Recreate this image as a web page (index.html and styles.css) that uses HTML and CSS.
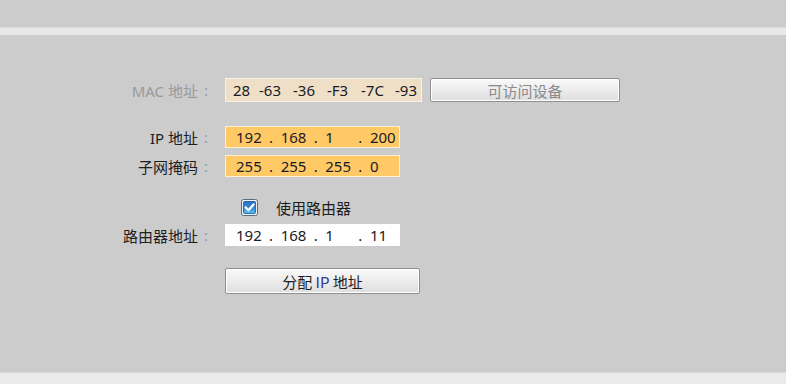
FILE: index.html
```html
<!DOCTYPE html>
<html lang="zh-CN">
<head>
  <meta charset="UTF-8">
  <meta name="viewport" content="width=device-width, initial-scale=1.0">
  <title>以太网地址</title>
  <link rel="stylesheet" href="styles.css">
</head>
<body>
  <div class="top-gap"></div>
  <div class="strip"></div>

  <div class="form">
    <div class="row row-mac">
      <span class="label disabled">MAC 地址</span>
      <span class="colon">:</span>
      <div class="field field-mac">
        <span class="mac-seg first">28</span>
        <span class="mac-seg">-63</span>
        <span class="mac-seg">-36</span>
        <span class="mac-seg">-F3</span>
        <span class="mac-seg">-7C</span>
        <span class="mac-seg last">-93</span>
      </div>
      <button class="btn btn-devices" disabled>可访问设备</button>
    </div>

    <div class="row row-ip">
      <span class="label">IP 地址</span>
      <span class="colon">:</span>
      <div class="field field-ip orange">
        <span class="seg">192</span><span class="dot">.</span>
        <span class="seg">168</span><span class="dot">.</span>
        <span class="seg">1</span><span class="dot">.</span>
        <span class="seg">200</span>
      </div>
    </div>

    <div class="row row-mask">
      <span class="label">子网掩码</span>
      <span class="colon">:</span>
      <div class="field field-ip orange">
        <span class="seg">255</span><span class="dot">.</span>
        <span class="seg">255</span><span class="dot">.</span>
        <span class="seg">255</span><span class="dot">.</span>
        <span class="seg">0</span>
      </div>
    </div>

    <div class="row row-check">
      <span class="label"></span>
      <span class="colon"></span>
      <label class="check">
        <svg class="check-box" width="17" height="17" viewBox="0 0 17 17">
          <defs>
            <linearGradient id="cb" x1="0" y1="0" x2="0" y2="1">
              <stop offset="0" stop-color="#2a6fc4"/>
              <stop offset="0.6" stop-color="#3a8fe0"/>
              <stop offset="1" stop-color="#56c0f0"/>
            </linearGradient>
          </defs>
          <rect x="0.5" y="0.5" width="16" height="16" rx="2" fill="#eef3f8" stroke="#5a6a7a"/>
          <rect x="2.5" y="2.5" width="12" height="12" rx="1" fill="url(#cb)" stroke="#1f4f8f" stroke-width="0.8"/>
          <path d="M4.6 8.4 L7.4 11.2 L12.6 5.4" fill="none" stroke="#fff" stroke-width="2.2" stroke-linecap="round" stroke-linejoin="round"/>
        </svg>
        <span class="check-text">使用路由器</span>
      </label>
    </div>

    <div class="row row-router">
      <span class="label">路由器地址</span>
      <span class="colon">:</span>
      <div class="field field-ip white">
        <span class="seg">192</span><span class="dot">.</span>
        <span class="seg">168</span><span class="dot">.</span>
        <span class="seg">1</span><span class="dot">.</span>
        <span class="seg">11</span>
      </div>
    </div>

    <div class="row row-assign">
      <span class="label"></span>
      <span class="colon"></span>
      <button class="btn btn-assign">分配 <span class="ip">IP</span> 地址</button>
    </div>
  </div>

  <div class="bottom-strip"></div>
</body>
</html>
```

FILE: styles.css
```css
html, body {
  margin: 0;
  height: 100%;
}
body {
  background-color: #cccccc;
  color: #222;
  font-family: "Noto Sans", "Noto Sans CJK SC", sans-serif;
  font-size: 15px;
  display: flex;
  flex-direction: column;
  height: 384px;
  overflow: hidden;
}
.top-gap {
  height: 27px;
}
.strip {
  height: 7px;
  background-color: #e8e8e8;
  border-top: 1px solid #dadada;
}
.form {
  padding-top: 43px;
}
.row {
  display: flex;
  align-items: center;
}
.label {
  width: 198px;
  text-align: right;
  color: #1e1e1e;
  white-space: nowrap;
}
.label.disabled {
  color: #9a9a9a;
}
.colon {
  width: 27px;
  padding-left: 6px;
  box-sizing: border-box;
  color: #8fa0b0;
}
.field {
  display: flex;
  align-items: center;
  box-sizing: border-box;
  height: 22px;
  border: 1px solid #f8f2e6;
  color: #1a1a28;
  white-space: nowrap;
}
.field-mac {
  width: 197px;
  height: 24px;
  padding-left: 7px;
  background-color: #eedfc6;
  overflow: hidden;
}
.mac-seg {
  width: 34px;
}
.mac-seg.first {
  width: 26px;
}
.mac-seg.last {
  width: auto;
}
.field-ip {
  width: 175px;
  padding-left: 10px;
}
.orange {
  background-color: #ffc966;
  border-color: #fff0d2;
}
.white {
  background-color: #ffffff;
  border-color: #ffffff;
}
.seg {
  width: 30px;
}
.dot {
  width: 12px;
  padding-left: 4px;
}
.btn {
  box-sizing: border-box;
  font-family: "Noto Sans CJK SC", "Noto Sans", sans-serif;
  font-size: 15px;
  border: 1px solid #8e8e8e;
  border-radius: 2px;
  background: linear-gradient(#fafafa, #ececec 50%, #dedede);
  box-shadow: inset 0 0 0 1px #ffffff;
  padding: 0;
  cursor: pointer;
}
.btn-devices {
  width: 190px;
  height: 24px;
  margin-left: 8px;
  color: #8a8a8a;
}
.row-ip {
  margin-top: 24px;
}
.row-mask {
  margin-top: 7px;
}
.row-check {
  margin-top: 19px;
  height: 22px;
}
.check {
  display: flex;
  align-items: center;
  padding-left: 16px;
}
.check-box {
  display: block;
}
.check-text {
  margin-left: 18px;
  color: #1e1e1e;
}
.row-router {
  margin-top: 6px;
}
.row-assign {
  margin-top: 22px;
}
.btn-assign {
  width: 195px;
  height: 26px;
  color: #1e1e1e;
}
.btn-assign .ip {
  color: #33339a;
}
.bottom-strip {
  margin-top: auto;
  height: 11px;
  background-color: #eaeaea;
  border-top: 1px solid #dcdcdc;
}
```
